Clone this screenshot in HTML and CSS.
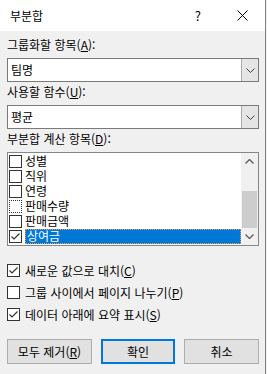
FILE: index.html
```html
<!DOCTYPE html>
<html lang="ko">
<head>
    <meta charset="UTF-8">
    <title>부분합</title>
    <link rel="stylesheet" href="styles.css">
</head>
<body>
    <div class="dialog">
        <!-- Title bar -->
        <div class="titlebar">
            <span class="title">부분합</span>
            <span class="help">?</span>
            <svg class="close" width="11" height="11" viewBox="0 0 11 11">
                <path d="M0.5 0.5 L10.5 10.5 M10.5 0.5 L0.5 10.5" stroke="#000" stroke-width="1" fill="none"/>
            </svg>
        </div>

        <div class="content">
            <div class="label first">그룹화할 항목(<u>A</u>):</div>
            <div class="combo">
                <span class="combo-text">팀명</span>
                <span class="combo-btn">
                    <svg width="9" height="5" viewBox="0 0 9 5"><path d="M0.5 0.5 L4.5 4.5 L8.5 0.5" stroke="#404040" fill="none"/></svg>
                </span>
            </div>

            <div class="label">사용할 함수(<u>U</u>):</div>
            <div class="combo">
                <span class="combo-text">평균</span>
                <span class="combo-btn">
                    <svg width="9" height="5" viewBox="0 0 9 5"><path d="M0.5 0.5 L4.5 4.5 L8.5 0.5" stroke="#404040" fill="none"/></svg>
                </span>
            </div>

            <div class="label">부분합 계산 항목(<u>D</u>):</div>
            <div class="listbox">
                <ul class="items">
                    <li><span class="box"></span><span class="item-text">성별</span></li>
                    <li><span class="box"></span><span class="item-text">직위</span></li>
                    <li><span class="box"></span><span class="item-text">연령</span></li>
                    <li><span class="box dotted"></span><span class="item-text">판매수량</span></li>
                    <li><span class="box"></span><span class="item-text">판매금액</span></li>
                    <li class="selected">
                        <span class="box">
                            <svg width="11" height="11" viewBox="0 0 11 11"><path d="M1.5 5.5 L4 8 L9.5 2.5" stroke="#333" stroke-width="1.2" fill="none"/></svg>
                        </span>
                        <span class="item-text sel-text">상여금</span>
                    </li>
                </ul>
                <div class="scrollbar">
                    <span class="arrow">
                        <svg width="9" height="5" viewBox="0 0 9 5"><path d="M0.5 4.5 L4.5 0.5 L8.5 4.5" stroke="#606060" stroke-width="1.4" fill="none"/></svg>
                    </span>
                    <div class="track"><div class="thumb"></div></div>
                    <span class="arrow">
                        <svg width="9" height="5" viewBox="0 0 9 5"><path d="M0.5 0.5 L4.5 4.5 L8.5 0.5" stroke="#606060" stroke-width="1.4" fill="none"/></svg>
                    </span>
                </div>
            </div>

            <div class="options">
                <label class="option">
                    <span class="box">
                        <svg width="11" height="11" viewBox="0 0 11 11"><path d="M1.5 5.5 L4 8 L9.5 2.5" stroke="#333" stroke-width="1.2" fill="none"/></svg>
                    </span>
                    <span>새로운 값으로 대치(<u>C</u>)</span>
                </label>
                <label class="option">
                    <span class="box"></span>
                    <span>그룹 사이에서 페이지 나누기(<u>P</u>)</span>
                </label>
                <label class="option">
                    <span class="box">
                        <svg width="11" height="11" viewBox="0 0 11 11"><path d="M1.5 5.5 L4 8 L9.5 2.5" stroke="#333" stroke-width="1.2" fill="none"/></svg>
                    </span>
                    <span>데이터 아래에 요약 표시(<u>S</u>)</span>
                </label>
            </div>

            <div class="buttons">
                <button class="btn">모두 제거(<u>R</u>)</button>
                <button class="btn default">확인</button>
                <button class="btn">취소</button>
            </div>
        </div>
    </div>
</body>
</html>
```

FILE: styles.css
```css
body {
    margin: 0;
    padding: 0;
    background: #f0f0f0;
    font-family: "Noto Sans CJK KR", "Noto Sans", sans-serif;
    font-size: 12px;
    color: #000;
}

u {
    text-decoration-thickness: 1px;
    text-underline-offset: 1px;
}

.dialog {
    width: 265px;
    height: 374px;
    border-right: 1px solid #808080;
    background: #f0f0f0;
}

/* Title bar */
.titlebar {
    height: 31px;
    background: #fff;
    display: flex;
    align-items: center;
    padding-left: 10px;
}

.title {
    flex: 1;
}

.help {
    font-size: 13px;
    margin-right: 36px;
}

.close {
    margin-right: 17px;
}

/* Body */
.content {
    padding: 0 6px 0 7px;
}

.label {
    height: 16px;
    line-height: 16px;
    margin: 2px 0 5px;
}

.label.first {
    margin-top: 6px;
}

.combo {
    height: 22px;
    border: 1px solid #7a7a7a;
    background: #fff;
    display: flex;
}

.combo-text {
    flex: 1;
    line-height: 22px;
    padding-left: 3px;
}

.combo-btn {
    width: 16px;
    background: #e5e5e5;
    border-left: 1px solid #acacac;
    display: flex;
    align-items: center;
    justify-content: center;
}

/* List box */
.listbox {
    height: 92px;
    border: 1px solid #828790;
    background: #fff;
    display: flex;
}

.items {
    flex: 1;
    list-style: none;
    margin: 0;
    padding: 1px 0 0 1px;
}

.items li {
    height: 15px;
    display: flex;
    align-items: center;
    gap: 3px;
}

.item-text {
    height: 15px;
    line-height: 14px;
}

.box {
    width: 11px;
    height: 11px;
    border: 1px solid #333;
    background: #fff;
    display: inline-flex;
    flex-shrink: 0;
}

.box.dotted {
    border-style: dotted;
}

.sel-text {
    flex: 1;
    background: #0078d7;
    color: #fff;
    padding-left: 1px;
    box-sizing: border-box;
    border: 1px dotted #f0a040;
    line-height: 12px;
}

.scrollbar {
    width: 17px;
    background: #f0f0f0;
    display: flex;
    flex-direction: column;
}

.arrow {
    height: 17px;
    display: flex;
    align-items: center;
    justify-content: center;
}

.track {
    flex: 1;
    display: flex;
    flex-direction: column;
    justify-content: flex-end;
}

.thumb {
    height: 37px;
    margin: 0 1px;
    background: #cdcdcd;
}

/* Options */
.options {
    margin-top: 16px;
    display: flex;
    flex-direction: column;
    gap: 6px;
}

.option {
    height: 16px;
    display: flex;
    align-items: center;
    gap: 5px;
}

/* Buttons */
.buttons {
    margin-top: 17px;
    display: flex;
    justify-content: space-between;
}

.btn {
    width: 85px;
    height: 25px;
    padding: 0;
    font-family: inherit;
    font-size: 12px;
    background: #e1e1e1;
    border: 1px solid #adadad;
    color: #000;
}

.btn.default {
    width: 74px;
    border: 2px solid #0078d7;
}

.btn:last-child {
    width: 75px;
}
```
